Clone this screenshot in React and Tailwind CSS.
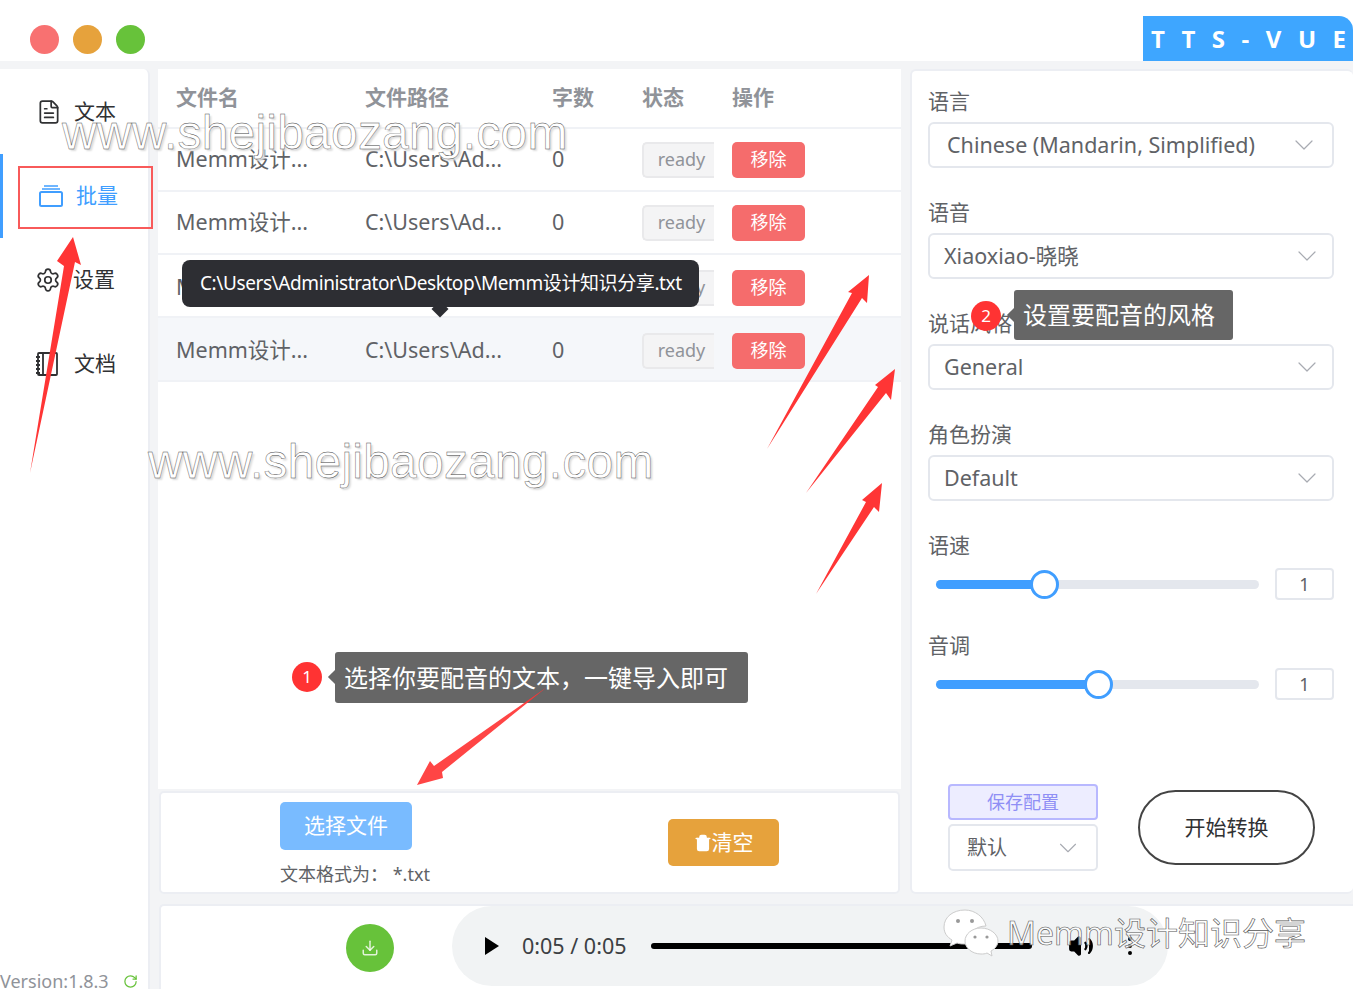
import {
  ChevronDown,
  Download,
  EllipsisVertical,
  FileText,
  RotateCw,
  Settings,
  Trash2,
  Volume2,
} from "lucide-react";

const rows = [
  { name: "Memm设计...", h: "h-[63px]" },
  { name: "Memm设计...", h: "h-[63px]" },
  { name: "Memm设计...", h: "h-[63px] pt-[4px]" },
  { name: "Memm设计...", h: "h-[64px] pt-[3px] bg-[#f5f7fa]" },
];

function TrayIcon() {
  return (
    <svg width="26" height="24" viewBox="0 0 26 24" fill="none" stroke="#409eff" strokeWidth="2">
      <rect x="2" y="8" width="22" height="14" rx="1.5" />
      <path d="M4 5h18M6 2h14" strokeWidth="1.5" />
    </svg>
  );
}

function NotebookIcon() {
  return (
    <svg width="24" height="26" viewBox="0 0 24 26" fill="none" stroke="#303133" strokeWidth="1.8">
      <rect x="3" y="2" width="19" height="22" rx="1" />
      <path d="M8 2v22M1 6h4M1 10h4M1 14h4M1 18h4M1 22h4" />
    </svg>
  );
}

function WeChatIcon() {
  return (
    <svg width="56" height="50" viewBox="0 0 56 50">
      <path d="M22 2C10 2 1 9 1 19c0 6 3 10 8 13l-2 6 7-3c3 1 5 1 8 1 1 0 2 0 3-.1C24 26 32 18 43 18 41 9 32 2 22 2z" fill="#fff" stroke="#ccc" strokeWidth="1" />
      <path d="M38 20c-9 0-16 6-16 13s7 13 16 13c2 0 4 0 6-1l5 3-1-5c4-2 7-6 7-10 0-7-8-13-17-13z" fill="#fff" stroke="#ccc" strokeWidth="1" />
      <circle cx="15" cy="13" r="2" fill="#999" />
      <circle cx="29" cy="13" r="2" fill="#999" />
      <circle cx="32" cy="29" r="1.6" fill="#999" />
      <circle cx="44" cy="29" r="1.6" fill="#999" />
    </svg>
  );
}

function Field({ label, value, className, first }) {
  return (
    <div className={className}>
      <div className="h-[30px] leading-[30px] text-[21px] text-[#606266]">{label}</div>
      <div className={`mt-[6px] h-[46px] w-[406px] border-2 border-[#e4e7ed] rounded-[6px] flex items-center bg-white ${first ? "pl-[17px] pr-[12px]" : "pl-[14px] pr-[9px]"}`}>
        <span className="text-[21.5px] text-[#606266] flex-1">{value}</span>
        <ChevronDown size={32} strokeWidth={0.9} className="text-[#a8abb2]" />
      </div>
    </div>
  );
}

function SliderField({ label, fill, thumb, className }) {
  return (
    <div className={className}>
      <div className="h-[30px] leading-[30px] text-[21px] text-[#606266]">{label}</div>
      <div className="mt-[6px] h-[36px] flex items-center pl-[8px]">
        <div className="relative w-[323px] h-[9px] rounded-full bg-[#e4e7ed]">
          <div className={`h-full rounded-full bg-[#409eff] ${fill}`} />
          <div className={`absolute top-[-10px] w-[29px] h-[29px] rounded-full bg-white border-[3px] border-[#409eff] ${thumb}`} />
        </div>
        <div className="ml-[16px] w-[59px] h-[32px] border-2 border-[#e4e7ed] rounded-[4px] flex items-center justify-center text-[18px] text-[#606266]">
          1
        </div>
      </div>
    </div>
  );
}

export default function App() {
  return (
    <div className="relative w-[1353px] h-[989px] overflow-hidden flex flex-col bg-[#f3f4f6] font-['Noto_Sans','Noto_Sans_CJK_SC',sans-serif]">
      {/* title bar */}
      <div className="h-[61px] bg-white flex justify-between shrink-0">
        <div className="flex items-center gap-[14px] pl-[30px] pt-[17px]">
          <div className="w-[29px] h-[29px] rounded-full bg-[#f87171]" />
          <div className="w-[29px] h-[29px] rounded-full bg-[#e6a23c]" />
          <div className="w-[29px] h-[29px] rounded-full bg-[#67c23a]" />
        </div>
        <div className="mt-[16px] w-[210px] h-[45px] bg-[#3ea6ff] rounded-tr-[14px] pl-[8px] pr-[7px] flex items-center justify-between text-white font-bold text-[24px] font-['Open_Sans',sans-serif]">
          <span>T</span>
          <span>T</span>
          <span>S</span>
          <span>-</span>
          <span>V</span>
          <span>U</span>
          <span>E</span>
        </div>
      </div>

      <div className="flex-1 flex pt-[8px] gap-[8px] min-h-0">
        {/* sidebar */}
        <div className="w-[150px] shrink-0 bg-white rounded-tr-[6px] border-r-2 border-[#eceef3] flex flex-col relative">
          <div className="h-[85px] flex items-center pl-[36px] gap-[12px] text-[21px] text-[#303133]">
            <FileText size={26} strokeWidth={1.6} />
            <span>文本</span>
          </div>
          <div className="h-[84px] flex items-center pl-[35px] gap-[12px] text-[21px] text-[#409eff] border-l-[3px] border-[#409eff]">
            <TrayIcon />
            <span>批量</span>
          </div>
          <div className="h-[84px] flex items-center pl-[35px] gap-[12px] text-[21px] text-[#303133]">
            <Settings size={26} strokeWidth={1.6} />
            <span>设置</span>
          </div>
          <div className="h-[84px] flex items-center pl-[35px] gap-[15px] text-[21px] text-[#303133]">
            <NotebookIcon />
            <span>文档</span>
          </div>
          <div className="mt-auto h-[16px] flex items-center gap-[14px] text-[18px] text-[#909399] whitespace-nowrap">
            <span>Version:1.8.3</span>
            <RotateCw size={15} className="text-[#67c23a]" />
          </div>
        </div>

        <div className="flex-1 flex flex-col min-w-0">
          <div className="flex gap-[9px] h-[825px] shrink-0">
            <div className="w-[743px] flex flex-col gap-[2px]">
              {/* table */}
              <div className="h-[720px] bg-white">
                <div className="h-[60px] flex items-center pl-[18px] border-b-2 border-[#f0f2f6] text-[21px] font-bold text-[#909399]">
                  <div className="w-[189px]">文件名</div>
                  <div className="w-[187px]">文件路径</div>
                  <div className="w-[90px]">字数</div>
                  <div className="w-[90px]">状态</div>
                  <div>操作</div>
                </div>
                {rows.map((row, i) => (
                  <div key={i} className={`${row.h} flex items-center pl-[18px] border-b-2 border-[#f0f2f6] text-[21.5px] text-[#606266]`}>
                    <div className="w-[189px]">{row.name}</div>
                    <div className="w-[187px]">C:\Users\Ad...</div>
                    <div className="w-[90px]">0</div>
                    <div className="w-[90px]">
                      <div className="w-[72px] h-[36px] border-2 border-r-0 border-[#e9e9eb] bg-[#f4f4f5] rounded-l-[5px] text-[18px] text-[#909399] flex items-center justify-center pl-[5px]">
                        ready
                      </div>
                    </div>
                    <div className="w-[73px] h-[36px] rounded-[5px] bg-[#f56c6c] text-white text-[18px] flex items-center justify-center">
                      移除
                    </div>
                  </div>
                ))}
              </div>

              {/* file picker */}
              <div className="mx-[1px] h-[103px] bg-white rounded-[5px] border-2 border-[#eceef3] flex">
                <div className="ml-[119px] pt-[9px] w-[388px]">
                  <div className="w-[132px] h-[48px] rounded-[5px] bg-[#79bbff] text-white text-[21px] flex items-center justify-center">
                    选择文件
                  </div>
                  <div className="mt-[11px] text-[18px] leading-[26px] text-[#606266]">文本格式为： *.txt</div>
                </div>
                <div className="mt-[26px] w-[111px] h-[47px] rounded-[5px] bg-[#e6a23c] text-white text-[21px] flex items-center justify-center">
                  <Trash2 size={18} strokeWidth={2.2} fill="white" />
                  <span>清空</span>
                </div>
              </div>
            </div>

            {/* settings */}
            <div className="flex-1 bg-white rounded-[6px] border-2 border-[#eceef3] border-r-0 pl-[16px] pt-[15px] flex flex-col">
              <Field label="语言" value="Chinese (Mandarin, Simplified)" first />
              <Field label="语音" value="Xiaoxiao-晓晓" className="mt-[29px]" />
              <Field label="说话风格" value="General" className="mt-[29px]" />
              <Field label="角色扮演" value="Default" className="mt-[29px]" />
              <SliderField label="语速" fill="w-[108px]" thumb="left-[94px]" className="mt-[29px]" />
              <SliderField label="音调" fill="w-[162px]" thumb="left-[148px]" className="mt-[28px]" />
              <div className="mt-auto mb-[21px] pl-[20px] flex items-center gap-[40px]">
                <div className="w-[150px] flex flex-col gap-[4px]">
                  <div className="h-[36px] border-2 border-[#b8b8ff] bg-[#ededff] rounded-[4px] text-[18px] text-[#8f8ff5] flex items-center justify-center">
                    保存配置
                  </div>
                  <div className="h-[47px] border-2 border-[#e4e7ed] rounded-[5px] flex items-center pl-[17px] pr-[13px] text-[20px] text-[#606266]">
                    <span className="flex-1">默认</span>
                    <ChevronDown size={30} strokeWidth={0.9} className="text-[#a8abb2]" />
                  </div>
                </div>
                <div className="w-[177px] h-[75px] rounded-full border-2 border-[#444] text-[21px] text-[#303133] flex items-center justify-center">
                  开始转换
                </div>
              </div>
            </div>
          </div>

          {/* player */}
          <div className="mt-[10px] ml-[1px] flex-1 bg-white rounded-tl-[5px] border-t-2 border-l-2 border-[#eceef3] flex">
            <div className="ml-[185px] mt-[18px] w-[48px] h-[48px] rounded-full bg-[#67c23a] flex items-center justify-center text-white/80 shrink-0">
              <Download size={18} />
            </div>
            <div className="ml-[58px] w-[716px] h-[80px] rounded-full bg-[#f1f3f4] flex items-center pl-[33px] shrink-0">
              <div className="w-0 h-0 border-y-[9px] border-y-transparent border-l-[14px] border-l-black" />
              <span className="ml-[23px] text-[21.5px] text-[#3c4043] whitespace-nowrap">0:05 / 0:05</span>
              <div className="ml-[24px] w-[381px] h-[6px] rounded-full bg-black" />
              <Volume2 size={26} className="ml-[36px] text-black" fill="black" />
              <EllipsisVertical size={24} className="ml-[24px] text-black" />
            </div>
          </div>
        </div>
      </div>

      {/* annotations laid over the app */}
      <div className="absolute left-[18px] top-[166px] w-[135px] h-[63px] border-2 border-[#f85a5a]" />

      <div className="absolute left-[182px] top-[260px] w-[517px] h-[47px] bg-[#2d2e33] rounded-[8px] flex items-center pl-[18px] text-white text-[19px] whitespace-nowrap tracking-[-0.4px]">
        C:\Users\Administrator\Desktop\Memm设计知识分享.txt
      </div>
      <div className="absolute left-[434px] top-[303px] w-[12px] h-[12px] rotate-45 bg-[#2d2e33]" />

      <div className="absolute left-[292px] top-[662px] w-[30px] h-[30px] rounded-full bg-[#ff3333] text-white text-[17px] flex items-center justify-center">1</div>
      <div className="absolute left-[335px] top-[652px] w-[413px] h-[51px] bg-[#666] rounded-[3px] pl-[9px] flex items-center text-white text-[24px] whitespace-nowrap">
        选择你要配音的文本，一键导入即可
      </div>
      <div className="absolute left-[330px] top-[672px] w-[10px] h-[10px] rotate-45 bg-[#666]" />

      <div className="absolute left-[971px] top-[301px] w-[30px] h-[30px] rounded-full bg-[#ff3333] text-white text-[17px] flex items-center justify-center">2</div>
      <div className="absolute left-[1014px] top-[290px] w-[219px] h-[50px] bg-[#666] rounded-[3px] pl-[9px] flex items-center text-white text-[24px] whitespace-nowrap">
        设置要配音的风格
      </div>
      <div className="absolute left-[1009px] top-[310px] w-[10px] h-[10px] rotate-45 bg-[#666]" />

      <div className="absolute left-[62px] top-[104px] text-[48px] leading-[58px] tracking-[0.2px] whitespace-nowrap font-['Liberation_Sans',sans-serif] text-white [-webkit-text-stroke:0.4px_#444] [text-shadow:2px_2px_2px_#dcdcdc]">
        www.shejibaozang.com
      </div>
      <div className="absolute left-[148px] top-[433px] text-[48px] leading-[58px] tracking-[0.2px] whitespace-nowrap font-['Liberation_Sans',sans-serif] text-white [-webkit-text-stroke:0.4px_#444] [text-shadow:2px_2px_2px_#dcdcdc]">
        www.shejibaozang.com
      </div>

      <svg className="absolute left-0 top-0 pointer-events-none" width="1353" height="989" viewBox="0 0 1353 989">
        <g fill="#ff3535">
          <polygon points="30,473 64,266 57,261 73,237 81,265 75,262" />
          <polygon points="767,449 852,293 848,292 869,275 867,303 862,298" />
          <polygon points="806,493 878,387 875,385 895,369 891,400 886,393" />
          <polygon points="816,594 866,502 862,500 882,483 879,512 874,507" />
          <polygon points="547,687 442,772 443,778 417,785 430,761 434,766" fillOpacity="0.92" />
        </g>
      </svg>

      <div className="absolute left-[943px] top-[908px] flex items-center gap-[8px] whitespace-nowrap">
        <WeChatIcon />
        <span className="text-[32px] leading-[50px] text-white/70 [-webkit-text-stroke:0.6px_#555]">Memm设计知识分享</span>
      </div>
    </div>
  );
}
